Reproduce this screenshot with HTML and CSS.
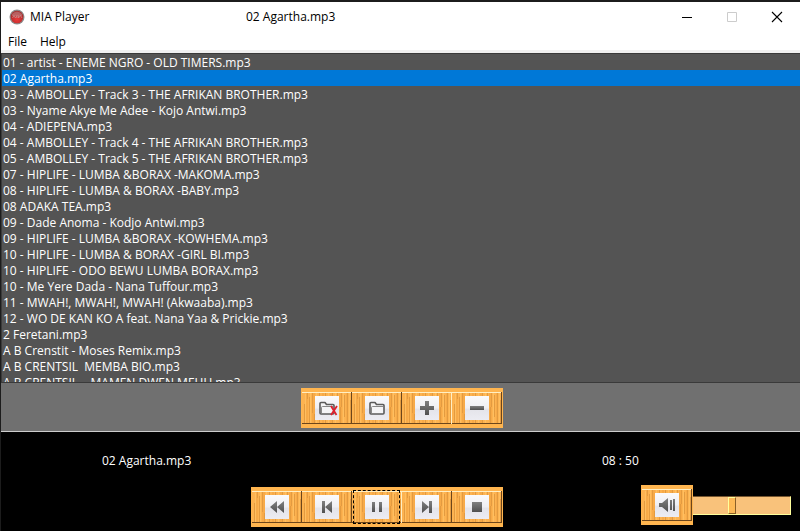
FILE: index.html
```html
<!DOCTYPE html>
<html lang="en">
<head>
<meta charset="utf-8">
<title>MIA Player</title>
<link rel="stylesheet" href="styles.css">
</head>
<body>
<svg class="defs" aria-hidden="true">
  <defs>
    <linearGradient id="tile" x1="0" y1="0" x2="0" y2="1">
      <stop offset="0" stop-color="#fafafc"/>
      <stop offset=".5" stop-color="#efeff3"/>
      <stop offset=".55" stop-color="#e4e4ea"/>
      <stop offset="1" stop-color="#ececf2"/>
    </linearGradient>
    <linearGradient id="metal" x1="0" y1="0" x2="0" y2="1">
      <stop offset="0" stop-color="#808080"/>
      <stop offset="1" stop-color="#505050"/>
    </linearGradient>
    <radialGradient id="badge" cx=".5" cy=".7" r=".6">
      <stop offset="0" stop-color="#ee3a3a"/>
      <stop offset="1" stop-color="#a82c2c"/>
    </radialGradient>
    <symbol id="wood" viewBox="0 0 50 40">
      <path fill="#ffb54f" d="M0 0h50v40H0z"/>
      <path fill="#fdb351" d="M0 4h50v32H0z"/>
      <path fill="#f7aa48" d="M4 5h2v31H4zM10 5h3v31h-3zM20 5h2v31h-2zM28 5h3v31h-3zM37 5h3v31h-3zM44 5h2v31h-2z"/>
      <path fill="none" stroke="#e39b40" d="M2.500 16v20M5.500 5v6M7.500 9v26M10.500 5v20M12.500 26v10M17.500 5v31M23.500 5v31M30.500 5v31M35.500 5v14M38.500 19v17M39.500 5v14M42.500 7v22M45.500 5v31M48.500 12v24"/>
      <path fill="none" stroke="#ffbf60" d="M3.500 6v30M8.500 5v31M14.500 5v31M26.500 5v31M33.500 5v31M41.500 5v31M47.500 5v31"/>
      <path fill="#ffefc4" d="M0 4h50v1H0z"/>
      <path fill="#6d461b" d="M0 35h50v1H0z"/>
      <path fill="url(#tile)" d="M13 8h24v24H13z"/>
    </symbol>
    <symbol id="folder" viewBox="0 0 50 40">
      <path fill="#f4f4f6" stroke="#5b5b5b" stroke-width="1.600" stroke-linejoin="round" d="M18 25V15.500q0-1 1-1h4l1.500 2h6.500q1 0 1 1V25q0 1-1 1H19q-1 0-1-1z"/>
      <path fill="none" stroke="#888" d="M19.500 25v-5.500q0-1 1-1h10.500"/>
    </symbol>
  </defs>
</svg>

<div class="window">
  <header class="titlebar">
    <div class="brand">
      <svg class="logo" viewBox="0 0 16 16" aria-hidden="true">
        <circle cx="8" cy="8" r="7.500" fill="#8c8c8c"/>
        <circle cx="8" cy="8" r="6.300" fill="url(#badge)"/>
        <path fill="#b98484" d="M3 5q5-5 10 0v2H3z" opacity=".6"/>
        <path fill="none" stroke="#c98a8a" stroke-width=".8" d="M3.500 9l1.500-2.500L6.500 9 8 6.500V9M9.500 6.500V9l2-2.500L13 9"/>
      </svg>
      <h1>MIA Player</h1>
    </div>
    <span class="document">02 Agartha.mp3</span>
    <div class="caption">
      <button type="button" aria-label="Minimize"><svg viewBox="0 0 12 12"><path fill="#000" d="M1 6h10v1H1z"/></svg></button>
      <button type="button" aria-label="Maximize" disabled><svg viewBox="0 0 12 12"><path fill="none" stroke="#ccc" d="M1.500 1.500h9v9h-9z"/></svg></button>
      <button type="button" aria-label="Close"><svg viewBox="0 0 12 12"><path fill="none" stroke="#000" stroke-width="1.100" d="M1 1l10 10M11 1L1 11"/></svg></button>
    </div>
  </header>
  <nav class="menu">
    <button type="button">File</button>
    <button type="button">Help</button>
  </nav>

  <select class="playlist" size="20" aria-label="Playlist">
    <option>01 - artist - ENEME NGRO - OLD TIMERS.mp3</option>
    <option selected>02 Agartha.mp3</option>
    <option>03 - AMBOLLEY - Track 3 - THE AFRIKAN BROTHER.mp3</option>
    <option>03 - Nyame Akye Me Adee - Kojo Antwi.mp3</option>
    <option>04 - ADIEPENA.mp3</option>
    <option>04 - AMBOLLEY - Track 4 - THE AFRIKAN BROTHER.mp3</option>
    <option>05 - AMBOLLEY - Track 5 - THE AFRIKAN BROTHER.mp3</option>
    <option>07 - HIPLIFE - LUMBA &amp;BORAX -MAKOMA.mp3</option>
    <option>08 - HIPLIFE - LUMBA &amp; BORAX -BABY.mp3</option>
    <option>08 ADAKA TEA.mp3</option>
    <option>09 - Dade Anoma - Kodjo Antwi.mp3</option>
    <option>09 - HIPLIFE - LUMBA &amp;BORAX -KOWHEMA.mp3</option>
    <option>10 - HIPLIFE - LUMBA &amp; BORAX -GIRL BI.mp3</option>
    <option>10 - HIPLIFE - ODO BEWU LUMBA BORAX.mp3</option>
    <option>10 - Me Yere Dada - Nana Tuffour.mp3</option>
    <option>11 - MWAH!, MWAH!, MWAH! (Akwaaba).mp3</option>
    <option>12 - WO DE KAN KO A feat. Nana Yaa &amp; Prickie.mp3</option>
    <option>2 Feretani.mp3</option>
    <option>A B Crenstit - Moses Remix.mp3</option>
    <option>A B CRENTSIL &nbsp;MEMBA BIO.mp3</option>
    <option>A B CRENTSIL &nbsp; &nbsp;MAMEN DWEN MEHU.mp3</option>
  </select>

  <div class="library">
    <div class="strip">
      <button type="button" aria-label="Clear playlist"><svg viewBox="0 0 50 40"><use href="#wood"/><use href="#folder"/><path fill="none" stroke="#df1f2d" stroke-width="1.800" d="M29 18l5.500 9M35 18l-6 9"/></svg></button>
      <button type="button" aria-label="Open folder"><svg viewBox="0 0 50 40"><use href="#wood"/><use href="#folder"/></svg></button>
      <button type="button" class="lit" aria-label="Add track"><svg viewBox="0 0 50 40"><use href="#wood"/><path fill="url(#metal)" d="M23 13h4v5h5v4h-5v5h-4v-5h-5v-4h5z"/></svg></button>
      <button type="button" aria-label="Remove track"><svg viewBox="0 0 50 40"><use href="#wood"/><path fill="url(#metal)" d="M18 18h14v4H18z"/></svg></button>
    </div>
  </div>

  <footer class="player">
    <span class="track">02 Agartha.mp3</span>
    <span class="time">08 : 50</span>
    <div class="strip transport">
      <button type="button" aria-label="Rewind"><svg viewBox="0 0 50 40"><use href="#wood"/><path fill="url(#metal)" d="M25 14v12l-7-6zM32 14v12l-7-6z"/></svg></button>
      <button type="button" aria-label="Previous"><svg viewBox="0 0 50 40"><use href="#wood"/><path fill="url(#metal)" d="M20 14h3v12h-3zM30 14v12l-7-6z"/></svg></button>
      <button type="button" class="lit focused" aria-label="Pause"><svg viewBox="0 0 50 40"><use href="#wood"/><path fill="url(#metal)" d="M20 15h3v10h-3zM27 15h3v10h-3z"/></svg></button>
      <button type="button" aria-label="Next"><svg viewBox="0 0 50 40"><use href="#wood"/><path fill="url(#metal)" d="M20 14v12l7-6zM27 14h3v12h-3z"/></svg></button>
      <button type="button" aria-label="Stop"><svg viewBox="0 0 50 40"><use href="#wood"/><path fill="url(#metal)" d="M20 15h10v10H20z"/></svg></button>
    </div>
    <div class="volume">
      <div class="strip">
        <button type="button" aria-label="Mute"><svg viewBox="0 0 50 40"><use href="#wood"/><path fill="url(#metal)" d="M17 18h3l6-5v14l-6-5h-3zM28 15h2v10h-2zM31 14h2v12h-2z"/></svg></button>
      </div>
      <input type="range" min="0" max="100" value="39" aria-label="Volume">
    </div>
  </footer>
</div>
</body>
</html>
```
FILE: styles.css
```css
* { box-sizing: border-box; }

body {
  margin: 0;
  font: 12px/16px "Open Sans", "Noto Sans", sans-serif;
  color: #000;
  background: #1c1c1c;
}

button, select, input { font: inherit; margin: 0; }
button { border: 0; padding: 0; background: none; color: inherit; }
svg { display: block; }
.defs { position: absolute; width: 0; height: 0; }

.window {
  display: flex;
  flex-direction: column;
  height: 100vh;
  padding: 2px 0 0 1px;
}

.titlebar {
  display: grid;
  grid-template-columns: 245fr 418fr 136px;
  align-items: center;
  height: 29px;
  background: #fff;
}
.brand { display: flex; align-items: center; gap: 5px; padding-left: 8px; }
.logo { width: 16px; height: 16px; }
h1 { margin: 0; font: inherit; }
.caption { display: flex; }
.caption button { display: grid; place-items: center; width: 46px; height: 29px; }
.caption svg { width: 12px; height: 12px; }

.menu {
  display: flex;
  gap: 13px;
  height: 22px;
  padding: 3px 7px 0;
  background: #fff;
  border-bottom: 3px solid #f0f0f0;
}
.menu button { line-height: 16px; height: 16px; }

.playlist {
  flex: 1;
  min-height: 0;
  width: 100%;
  padding: 0;
  border: 1px solid #3a3a3a;
  border-right: 0;
  border-radius: 0;
  outline: 0;
  overflow: hidden;
  scrollbar-width: none;
  background: #545454;
  color: #fff;
}
.playlist option {
  min-height: 16px;
  height: 16px;
  padding: 0 1px 2px;
  line-height: 14px;
  color: #fff;
}
.playlist option:checked {
  background: #0078d7 linear-gradient(#0078d7, #0078d7);
  color: #fff;
  -webkit-text-fill-color: #fff;
}

.library {
  display: flex;
  justify-content: center;
  padding: 5px 0 3px 2px;
  background: #707070;
  border-bottom: 1px solid #ccc;
}

.strip {
  display: flex;
  width: max-content;
  border: solid #ffb54f;
  border-width: 0 1px;
}
.strip button { position: relative; width: 50px; height: 40px; }
.strip svg { width: 50px; height: 40px; }
.strip button::before {
  content: "";
  position: absolute;
  inset: 4px 0;
  border-right: 1px solid #6d461b;
}
.strip .lit::before { border-right-color: #ffefc4; }
.strip .focused::after {
  content: "";
  position: absolute;
  inset: 3px 2px 3px 1px;
  border: 1px dashed #000;
}

.player {
  display: grid;
  grid-template-columns:
    minmax(0, 101fr) minmax(0, 149fr) minmax(0, 351fr)
    minmax(0, 39fr) minmax(0, 159fr);
  grid-template-rows: 53px 46px;
  align-items: start;
  background: #000;
  color: #fff;
}
.track, .time { padding-top: 21px; }
.track { grid-area: 1 / 2 / 2 / 4; }
.time { grid-area: 1 / 4 / 2 / 6; }
.transport { grid-area: 2 / 3; margin-top: 2px; }
.volume {
  grid-area: 2 / 5;
  display: flex;
  align-items: center;
  padding-right: 9px;
}
.volume input {
  appearance: none;
  flex: 1;
  min-width: 0;
  height: 19px;
  background: #f9c27b;
  border: solid #ffff9c;
  border-width: 1px 1px 1px 0;
  border-top-color: #75552f;
}
.volume input::-webkit-slider-thumb {
  appearance: none;
  width: 8px;
  height: 17px;
  background: #fdb956;
  border: 1px solid #ffff9c;
  border-right-color: #8a6028;
  border-bottom-color: #8a6028;
}
```
